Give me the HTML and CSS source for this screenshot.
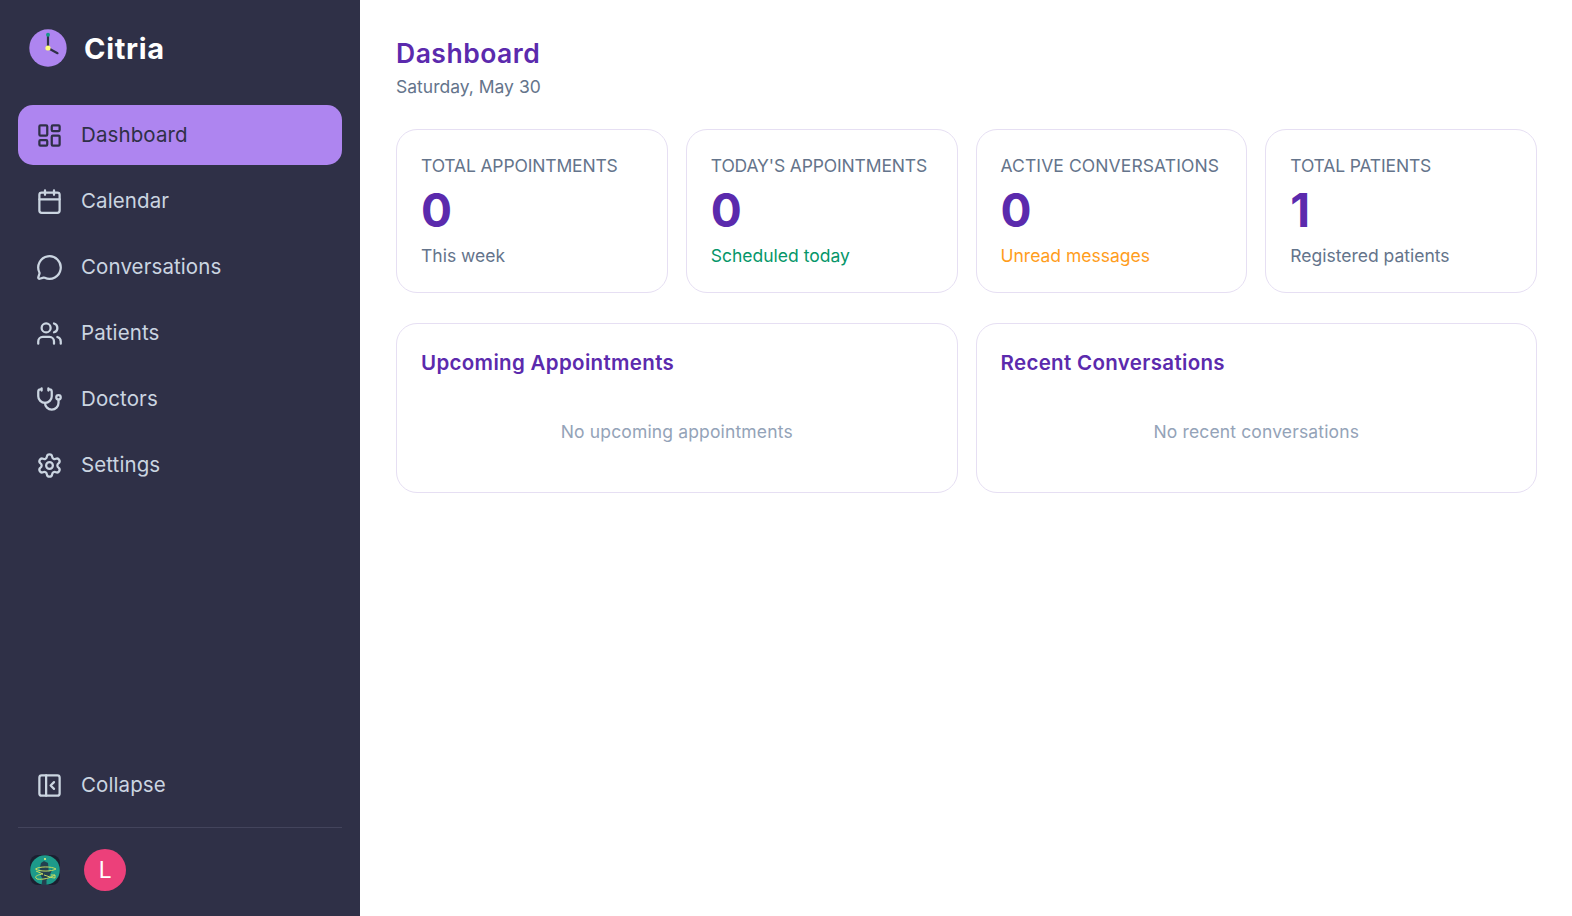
FILE: index.html
```html
<!DOCTYPE html>
<html lang="en">
<head>
    <meta charset="UTF-8">
    <meta name="viewport" content="width=device-width, initial-scale=1.0">
    <title>Citria</title>
    <link rel="stylesheet" href="styles.css">
</head>
<body>
    <aside class="sidebar">
        <div class="brand">
            <svg class="brand-logo" viewBox="0 0 38 38">
                <circle cx="19" cy="19" r="18.7" fill="#ae85f0"/>
                <path d="M19 19V7M19 19l9.5 5.2" stroke="#2f3047" stroke-width="2.2" stroke-linecap="round"/>
                <circle cx="19" cy="5.8" r="2" fill="#16998a"/>
                <circle cx="19" cy="19" r="2.6" fill="#fdfd7e"/>
            </svg>
            <span class="brand-name">Citria</span>
        </div>
        <nav class="nav">
            <a class="nav-item active">
                <svg class="icon" viewBox="0 0 24 24"><rect width="7" height="9" x="3" y="3" rx="1"/><rect width="7" height="5" x="14" y="3" rx="1"/><rect width="7" height="9" x="14" y="12" rx="1"/><rect width="7" height="5" x="3" y="16" rx="1"/></svg>
                <span>Dashboard</span>
            </a>
            <a class="nav-item">
                <svg class="icon" viewBox="0 0 24 24"><path d="M8 2v4M16 2v4"/><rect width="18" height="18" x="3" y="4" rx="2"/><path d="M3 10h18"/></svg>
                <span>Calendar</span>
            </a>
            <a class="nav-item">
                <svg class="icon" viewBox="0 0 24 24"><path d="M2.992 16.342a2 2 0 0 1 .094 1.167l-1.065 3.29a1 1 0 0 0 1.236 1.168l3.413-.998a2 2 0 0 1 1.099.092 10 10 0 1 0-4.777-4.719"/></svg>
                <span>Conversations</span>
            </a>
            <a class="nav-item">
                <svg class="icon" viewBox="0 0 24 24"><path d="M16 21v-2a4 4 0 0 0-4-4H6a4 4 0 0 0-4 4v2"/><circle cx="9" cy="7" r="4"/><path d="M22 21v-2a4 4 0 0 0-3-3.87M16 3.13a4 4 0 0 1 0 7.75"/></svg>
                <span>Patients</span>
            </a>
            <a class="nav-item">
                <svg class="icon" viewBox="0 0 24 24"><path d="M11 2v2M5 2v2M5 3H4a2 2 0 0 0-2 2v4a6 6 0 0 0 12 0V5a2 2 0 0 0-2-2h-1"/><path d="M8 15a6 6 0 0 0 12 0v-3"/><circle cx="20" cy="10" r="2"/></svg>
                <span>Doctors</span>
            </a>
            <a class="nav-item">
                <svg class="icon" viewBox="0 0 24 24"><path d="M9.671 4.136a2.34 2.34 0 0 1 4.659 0 2.34 2.34 0 0 0 3.319 1.915 2.34 2.34 0 0 1 2.33 4.033 2.34 2.34 0 0 0 0 3.831 2.34 2.34 0 0 1-2.33 4.033 2.34 2.34 0 0 0-3.319 1.915 2.34 2.34 0 0 1-4.659 0 2.34 2.34 0 0 0-3.32-1.915 2.34 2.34 0 0 1-2.33-4.033 2.34 2.34 0 0 0 0-3.831A2.34 2.34 0 0 1 6.35 6.051a2.34 2.34 0 0 0 3.319-1.915"/><circle cx="12" cy="12" r="3"/></svg>
                <span>Settings</span>
            </a>
        </nav>
        <div class="sidebar-footer">
            <a class="nav-item">
                <svg class="icon" viewBox="0 0 24 24"><rect width="18" height="18" x="3" y="3" rx="2"/><path d="M9 3v18M16 15l-3-3 3-3"/></svg>
                <span>Collapse</span>
            </a>
            <div class="accounts">
                <svg class="org" viewBox="0 0 30 30">
                    <rect width="30" height="30" rx="8" fill="#1b1f30"/>
                    <circle cx="15" cy="15" r="14.8" fill="#1d9a8a"/>
                    <path d="M10 12l1-4 3-2 4 2 .5 5v4l4-3-4 9-2 2v5h-5l1-6-2-4z" fill="#23404f"/>
                    <path d="M5.500 14c3-2.500 16-3 20.500 0-4 2.500-16 3-20.500 0zM6 16l7 3c-7 1-9 3-6 5 6 1 13-1 18-4M14 20c4 1 7 3 11 3M21 20h4v3" fill="none" stroke="#c5dc62"/>
                    <circle cx="15" cy="4" r="1.100" fill="#e8ef7a"/>
                </svg>
                <div class="avatar">L</div>
            </div>
        </div>
    </aside>
    <main class="main">
        <h1>Dashboard</h1>
        <p class="date">Saturday, May 30</p>
        <section class="stats">
            <div class="card">
                <div class="label">Total Appointments</div>
                <div class="value">0</div>
                <div class="note">This week</div>
            </div>
            <div class="card">
                <div class="label">Today's Appointments</div>
                <div class="value">0</div>
                <div class="note green">Scheduled today</div>
            </div>
            <div class="card">
                <div class="label wide">Active Conversations</div>
                <div class="value">0</div>
                <div class="note orange">Unread messages</div>
            </div>
            <div class="card">
                <div class="label">Total Patients</div>
                <div class="value">1</div>
                <div class="note">Registered patients</div>
            </div>
        </section>
        <section class="panels">
            <div class="card">
                <h2>Upcoming Appointments</h2>
                <p class="empty">No upcoming appointments</p>
            </div>
            <div class="card">
                <h2>Recent Conversations</h2>
                <p class="empty">No recent conversations</p>
            </div>
        </section>
    </main>
</body>
</html>
```
FILE: styles.css
```css
* {
    box-sizing: border-box;
}
body {
    margin: 0;
    height: 100vh;
    display: flex;
    overflow: hidden;
    background-color: #fff;
    font-family: Inter, "Liberation Sans", sans-serif;
    font-size: 17.5px;
    color: #64748b;
}
h1, h2, p {
    margin: 0;
}
.sidebar {
    width: 360px;
    flex-shrink: 0;
    display: flex;
    flex-direction: column;
    padding: 0 18px 25px;
    background-color: #2f3047;
}
.brand {
    display: flex;
    align-items: center;
    gap: 17px;
    height: 96px;
    padding-left: 11px;
}
.brand-logo {
    width: 38px;
    height: 38px;
}
.brand-name {
    color: #fff;
    font-size: 29px;
    font-weight: 700;
    letter-spacing: 0.7px;
}
.nav {
    display: flex;
    flex-direction: column;
    gap: 6px;
    margin-top: 9px;
}
.nav-item {
    display: flex;
    align-items: center;
    gap: 18px;
    height: 60px;
    padding: 0 18px;
    border-radius: 15px;
    color: #cbd5e1;
    font-size: 20.5px;
    letter-spacing: 0.1px;
}
.nav-item span {
    padding-bottom: 2px;
}
.nav-item.active {
    background-color: #ae85f0;
    color: #2f3047;
}
.icon {
    width: 27px;
    height: 27px;
    fill: none;
    stroke: currentColor;
    stroke-width: 2;
    stroke-linecap: round;
    stroke-linejoin: round;
}
.sidebar-footer {
    margin-top: auto;
}
.accounts {
    display: flex;
    align-items: center;
    gap: 24px;
    margin-top: 12px;
    padding: 21px 12px 0;
    border-top: 1px solid #43445c;
}
.org {
    width: 30px;
    height: 30px;
}
.avatar {
    width: 42px;
    height: 42px;
    border-radius: 50%;
    background-color: #ec407a;
    color: #fff;
    font-family: Roboto, sans-serif;
    font-size: 23px;
    line-height: 43px;
    text-align: center;
}
.main {
    flex: 1;
    padding: 35px 35px 36px 36px;
}
h1 {
    font-size: 26.5px;
    font-weight: 600;
    line-height: 36px;
    letter-spacing: 0.5px;
    color: #5b2aad;
}
.date {
    margin-top: 2px;
    line-height: 27px;
}
.stats, .panels {
    display: grid;
    gap: 18px;
}
.stats {
    grid-template-columns: repeat(4, 1fr);
    margin-top: 29px;
}
.panels {
    grid-template-columns: repeat(2, 1fr);
    margin-top: 30px;
}
.card {
    border: 1px solid #e6dff3;
    border-radius: 21px;
    padding: 23px 24px;
    white-space: nowrap;
}
.stats .card {
    height: 164px;
}
.panels .card {
    height: 170px;
}
.label {
    line-height: 25px;
    letter-spacing: -0.15px;
    text-transform: uppercase;
}
.label.wide {
    letter-spacing: 0.1px;
}
.value {
    margin-top: 5px;
    font-size: 46px;
    font-weight: 700;
    line-height: 54px;
    color: #5b2aad;
}
.note {
    margin-top: 5px;
    line-height: 27px;
}
.green {
    color: #059669;
}
.orange {
    color: #ff9d1c;
}
h2 {
    margin-top: 1px;
    font-size: 20.5px;
    font-weight: 600;
    line-height: 30px;
    letter-spacing: 0.33px;
    color: #5b2aad;
}
.empty {
    margin-top: 40px;
    line-height: 27px;
    letter-spacing: 0.15px;
    text-align: center;
    color: #94a3b8;
}
```
